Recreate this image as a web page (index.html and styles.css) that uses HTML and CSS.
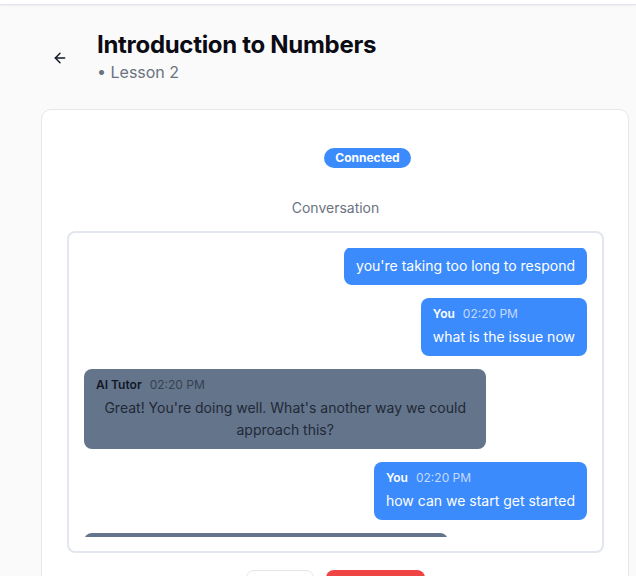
FILE: index.html
```html
<!DOCTYPE html>
<html>
<head>
<meta charset="utf-8">
<link rel="stylesheet" href="styles.css">
</head>
<body>
<div class="topbar"></div>
<header class="header">
  <button class="back" aria-label="Back">
    <svg width="16" height="16" viewBox="0 0 24 24" fill="none" stroke="#111827" stroke-width="2.2" stroke-linecap="round" stroke-linejoin="round"><path d="M19 12H5"/><path d="M12 19l-7-7 7-7"/></svg>
  </button>
  <div class="titles">
    <h1 class="title">Introduction to Numbers</h1>
    <div class="sub">• Lesson 2</div>
  </div>
</header>
<main class="card">
  <div class="status-row"><span class="badge">Connected</span></div>
  <div class="conv-label">Conversation</div>
  <div class="conv-box">
    <div class="scroll">
      <div class="msgs">
        <div class="msg user"><div class="text">you're taking too long to respond</div></div>
        <div class="msg user"><div class="meta"><span class="who">You</span><span class="time">02:20 PM</span></div><div class="text">what is the issue now</div></div>
        <div class="msg ai"><div class="meta"><span class="who">AI Tutor</span><span class="time">02:20 PM</span></div><div class="text">Great! You're doing well. What's another way we could approach this?</div></div>
        <div class="msg user"><div class="meta"><span class="who">You</span><span class="time">02:20 PM</span></div><div class="text">how can we start get started</div></div>
        <div class="msg ai next"><div class="meta"><span class="who">AI Tutor</span><span class="time">02:20 PM</span></div><div class="text">Let's begin.</div></div>
      </div>
    </div>
  </div>
  <div class="actions">
    <button class="btn ghost">Mute</button>
    <button class="btn danger">End Session</button>
  </div>
</main>
</body>
</html>
```
FILE: styles.css
```css
* { box-sizing: border-box; }
html, body { margin: 0; padding: 0; }
body {
  background: #fafafa;
  font-family: Inter, "Noto Sans", sans-serif;
  color: #111827;
  height: 576px;
  overflow: hidden;
}
.topbar {
  height: 5px;
  background: #ffffff;
  border-bottom: 1px solid #e2e5ee;
  box-shadow: 0 1px 2px rgba(30, 41, 80, 0.06);
}
.header {
  display: flex;
  align-items: flex-start;
  padding: 26px 0 0 50px;
  height: 104px;
}
.back {
  background: none;
  border: none;
  padding: 0;
  margin-top: 17px;
  width: 20px;
  height: 20px;
  display: flex;
  align-items: center;
  justify-content: center;
  cursor: pointer;
}
.titles { margin-left: 27px; }
.title {
  margin: 0;
  font-size: 24px;
  font-weight: 700;
  line-height: 28px;
  color: #0b0b14;
  letter-spacing: -0.3px;
}
.sub {
  margin-top: 3px;
  font-size: 16px;
  line-height: 20px;
  color: #6b7280;
}
.card {
  margin: 0 7px 0 41px;
  background: #ffffff;
  border: 1px solid #e5e7eb;
  border-radius: 10px;
  padding: 38px 24px 0 25px;
  height: 480px;
}
.status-row {
  display: flex;
  justify-content: center;
  padding-left: 64px;
}
.badge {
  background: #3b8bfd;
  color: #fff;
  font-size: 12px;
  font-weight: 700;
  line-height: 20px;
  padding: 0 11px;
  border-radius: 10px;
}
.conv-label {
  text-align: center;
  margin-top: 30px;
  font-size: 14px;
  line-height: 20px;
  color: #6b7280;
}
.conv-box {
  margin-top: 13px;
  border: 2px solid #e2e6ee;
  border-radius: 8px;
  padding: 15px 15px 14px 15px;
  height: 322px;
}
.scroll {
  height: 100%;
  overflow: hidden;
}
.msgs {
  display: flex;
  flex-direction: column;
  gap: 13px;
  margin-top: -1px;
}
.msg {
  max-width: 80%;
  border-radius: 8px;
  padding: 8px 12px;
  font-size: 14px;
  line-height: 22px;
}
.msg.user {
  align-self: flex-end;
  background: #3b8bfd;
  color: #ffffff;
}
.msg.ai {
  align-self: flex-start;
  background: #64748b;
  color: #1f2937;
  text-align: center;
}
.meta {
  display: flex;
  gap: 8px;
  font-size: 12px;
  line-height: 16px;
  margin-bottom: 4px;
}
.who { font-weight: 600; }
.msg.user .time { color: #c3d9fe; }
.msg.ai .who { color: #111827; }
.msg.ai .time { color: #374151; }
.msg.ai.next { width: 364px; }
.actions {
  display: flex;
  justify-content: center;
  gap: 12px;
  margin-top: 17px;
}
.btn {
  font-family: Inter, sans-serif;
  font-size: 14px;
  font-weight: 600;
  height: 44px;
  border-radius: 8px;
  padding: 0 14px;
}
.btn.ghost {
  background: #fff;
  border: 1px solid #e5e7eb;
  color: #111827;
  width: 68px;
}
.btn.danger {
  background: #ef4444;
  border: none;
  color: #fff;
  width: 99px;
}
```
